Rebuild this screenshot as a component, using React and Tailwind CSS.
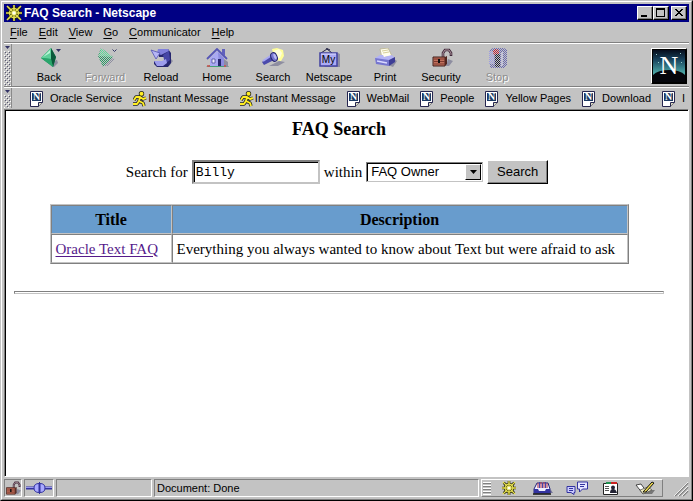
import { useState } from "react";

const menus = ["File", "Edit", "View", "Go", "Communicator", "Help"];

const bookmarks = [
  { label: "Oracle Service", type: "page" },
  { label: "Instant Message", type: "aim" },
  { label: "Instant Message", type: "aim" },
  { label: "WebMail", type: "page" },
  { label: "People", type: "page" },
  { label: "Yellow Pages", type: "page" },
  { label: "Download", type: "page" },
  { label: "I", type: "page" },
];

const results = [
  {
    title: "Oracle Text FAQ",
    description: "Everything you always wanted to know about Text but were afraid to ask",
  },
];

const WheelIcon = ({ className }) => (
  <svg className={className} viewBox="0 0 16 16" aria-hidden="true">
    <path d="M8 0v16M0 8h16M2 2l12 12M14 2L2 14" stroke="#222200" strokeWidth="3" />
    <circle cx="8" cy="8" r="4.5" fill="none" stroke="#222200" strokeWidth="3" />
    <path d="M8 0v16M0 8h16M1 1l14 14M15 1L1 15" stroke="#e6e052" strokeWidth="1.6" />
    <circle cx="8" cy="8" r="4.5" fill="none" stroke="#e6e052" strokeWidth="1.3" />
    <circle cx="8" cy="8" r="1.800" fill="#fffff0" />
  </svg>
);

const ToolSvg = ({ children }) => (
  <svg className="w-6 h-5 shrink-0" viewBox="0 0 24 20" aria-hidden="true">
    {children}
  </svg>
);

const BackIcon = () => (
  <ToolSvg>
    <path d="M14 18l3 1 4-4-1-3-3 1z" fill="#8d8da0" />
    <path d="M4 10L14 0l5 9-3 10z" fill="#18965c" />
    <path d="M14 0l5 9-3 10-2-8z" fill="#0b5a3b" />
    <path d="M4 10L14 0v11z" fill="#5fd09a" />
    <path d="M6 9l7-7v3z" fill="#b9f5d6" />
    <path d="M4 10l10 1 2 8z" fill="#2aa56c" />
    <path d="M19 1h5l-2.500 3z" fill="#333366" />
  </ToolSvg>
);

const ForwardIcon = () => (
  <ToolSvg>
    <defs>
      <pattern id="dither" width="2" height="2" patternUnits="userSpaceOnUse">
        <path d="M0 0h1v1H0zM1 1h1v1H1z" fill="#c3c3c3" />
      </pattern>
    </defs>
    <path d="M9 18h6l7-7-4-1z" fill="#8d8da0" />
    <path d="M5 8l3-8 12 9-10 10z" fill="#289a64" />
    <path d="M8 0l12 9-14-1z" fill="#5ade98" />
    <path d="M4 0h20v20H4z" fill="url(#dither)" />
    <path d="M19.500 1.500l2 2 2-2" fill="none" stroke="#333366" />
  </ToolSvg>
);

const ReloadIcon = () => (
  <ToolSvg>
    <path d="M14 19l6-1 4-5-3-3z" fill="#8d8da0" />
    <path d="M9 1h10l3 4v10l-3 4H8l-3-3v-3h10V9l-5 0z" fill="#26266f" />
    <path d="M9 1h10l1 2-8 4-4-2z" fill="#8080dc" />
    <path d="M14 7l6-4 1 9-5 4z" fill="#4646a6" />
    <path d="M5 13h8l4-2 1 4-4 3H8z" fill="#9c9cec" />
    <path d="M2 2l9 3-4 6z" fill="#b5b5f5" stroke="#5252b0" strokeWidth=".8" />
  </ToolSvg>
);

const HomeIcon = () => (
  <ToolSvg>
    <path d="M1 19l4-2h17l2 2z" fill="#46a078" />
    <path d="M18 18l5 1v-5l-4-3z" fill="#8d8da0" />
    <path d="M5 10l7-7 7 7v8H5z" fill="#a9a9f2" />
    <path d="M13 4l6 6v8h-5z" fill="#8c8ce0" />
    <path d="M17 1h3v7l-3-3z" fill="#6161bd" />
    <path d="M2 11L12 1l10 10" fill="none" stroke="#5656b6" strokeWidth="1.800" />
    <path d="M7 11h3v4H7z" fill="#eeeeff" stroke="#3c3c91" strokeWidth=".7" />
    <path d="M13 11h3v7h-3z" fill="#26266f" />
    <path d="M2 18h3M19 18h2" stroke="#d04b4b" strokeWidth="1.500" />
  </ToolSvg>
);

const SearchIcon = () => (
  <ToolSvg>
    <path d="M11 1l5-1 6 2 1 6-3 5-6-1z" fill="#ffff99" />
    <path d="M13 3l5-2 3 4-2 5-4 1z" fill="#ffffd9" />
    <path d="M8 18l10-5 6 1-7 4z" fill="#8d8da0" />
    <path d="M1 14l9-7 3 5-10 5z" fill="#4b4bac" />
    <path d="M2 13l9-6" stroke="#a9a9f2" strokeWidth="2" />
    <ellipse cx="13" cy="9" rx="3" ry="4.5" transform="rotate(-24 13 9)" fill="#7676cf" stroke="#26266f" />
    <ellipse cx="14" cy="8.500" rx="1.300" ry="3" transform="rotate(-24 14 8.500)" fill="#b9b9f5" />
  </ToolSvg>
);

const MyIcon = () => (
  <ToolSvg>
    <path d="M7 19h16V6l-2-1z" fill="#8d8da0" />
    <path d="M4 5L10 1l5 4M9 0l4 2" fill="none" stroke="#222244" />
    <path d="M3 5h17v13H3z" fill="#ababf4" stroke="#4242a0" strokeWidth="1.500" />
    <path d="M4 6h15" stroke="#e0e0ff" />
    <text x="11.500" y="15" textAnchor="middle" fontFamily="Liberation Sans, sans-serif" fontSize="10" fill="#000">
      My
    </text>
  </ToolSvg>
);

const PrintIcon = () => (
  <ToolSvg>
    <path d="M15 17l5 2 4-6-3-2z" fill="#8d8da0" />
    <path d="M7 1l8-1 4 8-10 2z" fill="#fffdec" stroke="#b9b38b" strokeWidth=".8" />
    <path d="M9 3l6-1M10 5l6-1" stroke="#d6cf9d" />
    <path d="M2 10l5-3h3l1 2 8-2 3 3-5 3H3z" fill="#b3b3f5" />
    <path d="M2 10l14 2v6L3 16z" fill="#7575cf" />
    <path d="M16 12l6-3v5l-6 4z" fill="#3d3d96" />
    <path d="M4 13l10 2" stroke="#d9d9ff" strokeWidth="1.500" />
  </ToolSvg>
);

const LockShape = () => (
  <>
    <path d="M17 18l3 0 4-5-5-2z" fill="#8d8da0" />
    <path d="M14 9V5l2-3h4l2 3v3" fill="none" stroke="#40283a" strokeWidth="2.600" />
    <path d="M14 9V5l2-3h4l2 3v2" fill="none" stroke="#b9a0a8" strokeWidth=".9" />
    <path d="M4 9h12v9H4z" fill="#c0705c" stroke="#42201c" />
    <path d="M5 11h11M5 13.500h11M5 16h11" stroke="#7c382e" />
    <path d="M10 11v4" stroke="#111" strokeWidth="2" />
    <path d="M16 9l2-1v8l-2 2z" fill="#50241f" />
  </>
);

const LockIcon = () => (
  <ToolSvg>
    <LockShape />
  </ToolSvg>
);

const StopIcon = () => (
  <ToolSvg>
    <path d="M5 2l3-2h11l3 2v15l-3 3H5z" fill="#6a6ab0" />
    <path d="M4 3h5v13H4z" fill="#9d9de0" />
    <circle cx="11" cy="4" r="3" fill="#c01a2f" />
    <path d="M10 6h5v13h-5z" fill="#222238" />
    <path d="M16 4h2v14h-2z" fill="#c3c3e8" />
    <path d="M2 0h20v20H2z" fill="url(#dither)" />
  </ToolSvg>
);

const tools = [
  { label: "Back", Icon: BackIcon },
  { label: "Forward", Icon: ForwardIcon, disabled: true },
  { label: "Reload", Icon: ReloadIcon },
  { label: "Home", Icon: HomeIcon },
  { label: "Search", Icon: SearchIcon },
  { label: "Netscape", Icon: MyIcon },
  { label: "Print", Icon: PrintIcon },
  { label: "Security", Icon: LockIcon },
  { label: "Stop", Icon: StopIcon, disabled: true },
];

const PageIcon = () => (
  <svg className="w-3.5 h-4 shrink-0" viewBox="0 0 14 16" aria-hidden="true">
    <path d="M.5 .5h12v11l-4 4h-8z" fill="#fff" stroke="#26264f" />
    <path d="M8.500 15.500v-4h4" fill="#d8d8c0" stroke="#26264f" />
    <path d="M2 2h9v8H2z" fill="#1c3a63" />
    <text x="6.500" y="9" textAnchor="middle" fontFamily="Liberation Serif, serif" fontWeight="bold" fontSize="10" fill="#fff">
      N
    </text>
  </svg>
);

const AimIcon = () => (
  <svg className="w-3.5 h-4 shrink-0" viewBox="0 0 14 16" aria-hidden="true">
    <g fill="none" strokeLinejoin="round">
      <path d="M1 9l2-3 4 0 3 2 3-1M7 6l-1 4 4 2 1 3M6 10l-2 3-4 0" stroke="#222" strokeWidth="3.400" />
      <circle cx="8.500" cy="2.700" r="2.700" fill="#222" />
      <path d="M1 9l2-3 4 0 3 2 3-1M7 6l-1 4 4 2 1 3M6 10l-2 3-4 0" stroke="#ffee22" strokeWidth="1.900" />
      <circle cx="8.500" cy="2.700" r="2" fill="#ffee22" />
    </g>
  </svg>
);

const Grip = ({ className }) => (
  <svg className={`w-2 shrink-0 ${className}`} aria-hidden="true">
    <defs>
      <pattern id="dots" width="4" height="4" patternUnits="userSpaceOnUse">
        <path d="M1 0h1v1H1zM3 2h1v1H3z" fill="#555570" />
        <path d="M2 1h1v1H2zM0 3h1v1H0z" fill="#fff" />
      </pattern>
    </defs>
    <rect y="7" width="7" height="100%" fill="url(#dots)" />
    <path d="M1 2h5L3.500 5z" fill="#333366" />
    <path d="M7.500 0v60" stroke="#8a8a8a" />
  </svg>
);

const NetscapeLogo = () => (
  <svg className="w-8 h-8" viewBox="0 0 32 32" role="img" aria-label="Netscape">
    <defs>
      <linearGradient id="sky" x1="0" y1="0" x2="0" y2="1">
        <stop offset="0" stopColor="#060d1c" />
        <stop offset=".3" stopColor="#17425c" />
        <stop offset=".7" stopColor="#4aa3a3" />
      </linearGradient>
    </defs>
    <path d="M0 0h32v32H0z" fill="url(#sky)" />
    <path d="M0 25q5-5 16-5t16 5v7H0z" fill="#05060c" />
    <path d="M3 4h1v1H3zM27 3h1v1h-1zM5 12h1v1H5zM28 12h1v1h-1z" fill="#9cc" />
    <text x="16" y="24" textAnchor="middle" fontFamily="Liberation Serif, serif" fontSize="26" fill="#fff">
      N
    </text>
  </svg>
);

const MailIcon = () => (
  <svg className="w-5 h-3.5" viewBox="0 0 20 14" aria-hidden="true">
    <path d="M15 12h5l-2-3z" fill="#777799" />
    <path d="M4 2h11l2 6v4H1V8z" fill="#eeeeff" stroke="#22227a" />
    <path d="M5 2v5M8 1v6M11 1v6M14 2v5" stroke="#b02a3f" />
    <path d="M6.500 1v6M9.500 2v5M12.500 1v6" stroke="#4444aa" />
    <path d="M1 8h4l1 2h6l1-2h4v4H1z" fill="#3333a0" />
    <path d="M0 13h18" stroke="#111" strokeWidth="1.500" />
  </svg>
);

const ChatIcon = () => (
  <svg className="w-6 h-3.5" viewBox="0 0 24 14" aria-hidden="true">
    <path d="M12.500 1h10v7h-5l-3 3v-3h-2z" fill="#e6e6ff" stroke="#3333a0" />
    <path d="M2 5.500h8v6h-1v2l-3-2H2z" fill="#ccccff" stroke="#3333a0" />
    <path d="M15 3.500h5M15 5.500h4M4 7.500h4M4 9.500h4" stroke="#3333a0" />
  </svg>
);

const CardIcon = () => (
  <svg className="w-5 h-3.5" viewBox="0 0 20 14" aria-hidden="true">
    <path d="M2.500 2.500h14v11h-14z" fill="#fff" stroke="#222" />
    <path d="M5 1h5v2H5z" fill="#209050" />
    <path d="M10 1h6v2h-6z" fill="#cc2222" />
    <path d="M4 5.500h4M4 7.500h4M4 9.500h4" stroke="#555" />
    <circle cx="12" cy="6.500" r="2" fill="#223" />
    <path d="M9 12q0-4 3-4t4 4z" fill="#223" />
  </svg>
);

const PenIcon = () => (
  <svg className="w-5 h-3.5" viewBox="0 0 20 14" aria-hidden="true">
    <path d="M7 13h10l3-4H10z" fill="#777" />
    <path d="M1 4l5-1 5 7-3 3z" fill="#fff" stroke="#222" strokeWidth=".8" />
    <path d="M5 9l3 4 9-4-4-3z" fill="#f3eec0" stroke="#555" strokeWidth=".8" />
    <path d="M8 11l9-10 2 1-8 9z" fill="#f0dc50" stroke="#111" />
  </svg>
);

const components = [
  { label: "Navigator", icon: <WheelIcon className="w-4 h-3.5" /> },
  { label: "Inbox", icon: <MailIcon /> },
  { label: "Newsgroups", icon: <ChatIcon /> },
  { label: "Address Book", icon: <CardIcon /> },
  { label: "Composer", icon: <PenIcon /> },
];

const WindowButton = ({ label, children }) => (
  <button
    aria-label={label}
    className="w-4 h-3.5 bg-[#c3c3c3] border border-t-white border-l-white border-r-black border-b-black shadow-[inset_-1px_-1px_#808080]"
  >
    <svg className="w-3.5 h-3" viewBox="0 0 14 12" fill="none" stroke="#000" shapeRendering="crispEdges">
      {children}
    </svg>
  </button>
);

const SearchForm = () => {
  const [query, setQuery] = useState("Billy");
  const [scope, setScope] = useState("FAQ Owner");

  return (
    <form
      className="mt-[21px] pr-1 flex items-center justify-center gap-1 whitespace-nowrap"
      onSubmit={(e) => e.preventDefault()}
    >
      <label htmlFor="query">Search for</label>
      <input
        id="query"
        type="text"
        value={query}
        onChange={(e) => setQuery(e.target.value)}
        className="w-32 h-6 px-0.5 rounded-none bg-white font-['Liberation_Mono',monospace] text-[13px] border-2 border-t-[#808080] border-l-[#808080] border-r-[#c3c3c3] border-b-[#c3c3c3] shadow-[inset_1px_1px_#000] outline-none"
      />
      <label htmlFor="scope">within</label>
      <div className="relative">
        <select
          id="scope"
          value={scope}
          onChange={(e) => setScope(e.target.value)}
          className="block appearance-none w-[117px] h-5 pl-1 rounded-none bg-white font-['Liberation_Sans',sans-serif] text-[13px] leading-4 border border-t-[#808080] border-l-[#808080] border-r-[#c3c3c3] border-b-[#c3c3c3] shadow-[inset_1px_1px_#000] outline-none"
        >
          <option>FAQ Owner</option>
        </select>
        <span className="absolute top-0.5 right-0.5 bottom-0.5 w-4 flex items-center justify-center pointer-events-none bg-[#c3c3c3] border border-t-white border-l-white border-r-black border-b-black">
          <svg className="w-[7px] h-1" viewBox="0 0 7 4" aria-hidden="true">
            <path d="M0 0h7L3.500 4z" />
          </svg>
        </span>
      </div>
      <button
        type="submit"
        className="w-[61px] h-6 bg-[#c3c3c3] font-['Liberation_Sans',sans-serif] text-[13px] border border-t-white border-l-white border-r-black border-b-black shadow-[inset_-1px_-1px_#808080]"
      >
        Search
      </button>
    </form>
  );
};

const cell = "border border-t-[#808080] border-l-[#808080] border-r-[#c3c3c3] border-b-[#c3c3c3] px-1";

const App = () => {
  return (
    <div className="min-h-screen flex flex-col bg-[#c3c3c3] text-black border border-t-[#c3c3c3] border-l-[#c3c3c3] border-r-black border-b-black font-['Liberation_Sans',sans-serif] text-[11px]">
      <div className="flex-1 min-w-0 flex flex-col p-0.5 border border-t-white border-l-white border-r-[#808080] border-b-[#808080]">
        {/* Title bar */}
        <header className="flex items-center h-[18px] px-0.5 bg-[#000084] text-white">
          <WheelIcon className="w-4 h-4 shrink-0" />
          <h1 className="ml-0.5 flex-1 text-xs font-bold">FAQ Search - Netscape</h1>
          <div className="flex">
            <WindowButton label="Minimize">
              <path d="M3 9h6" strokeWidth="2" />
            </WindowButton>
            <WindowButton label="Maximize">
              <path d="M2 1.500h9M2.500 1v9M10.500 1v9M2 9.500h9M2 2.500h9" />
            </WindowButton>
            <span className="w-0.5" />
            <WindowButton label="Close">
              <path d="M3 2l7 7M4 2l7 7M10 2L3 9M11 2L4 9" />
            </WindowButton>
          </div>
        </header>

        {/* Menu bar */}
        <nav className="flex items-center h-5 px-1.5 gap-[11px] leading-4">
          {menus.map((name) => (
            <button key={name}>
              <span className="underline underline-offset-2">{name[0]}</span>
              {name.slice(1)}
            </button>
          ))}
        </nav>

        {/* Navigation toolbar */}
        <div className="border-t border-t-[#808080]">
          <div className="flex border-t border-white">
            <Grip className="h-[42px]" />
            <div className="flex flex-1 pl-[9px] pt-1 pb-0.5">
              {tools.map(({ label, Icon, disabled }) => (
                <button
                  key={label}
                  disabled={disabled}
                  className="w-14 flex flex-col items-center gap-0.5 leading-[14px] disabled:text-[#8c8c8c] disabled:[text-shadow:1px_1px_0_#fff]"
                >
                  <Icon />
                  {label}
                </button>
              ))}
            </div>
            <div className="self-start mt-1 mr-0.5 p-px bg-black border border-t-white border-l-white border-r-black border-b-black">
              <NetscapeLogo />
            </div>
          </div>
        </div>

        {/* Personal toolbar */}
        <div className="border-t border-t-[#808080]">
          <div className="flex h-[22px] overflow-hidden border-t border-white">
            <Grip className="h-5" />
            <div className="flex items-center gap-[11px] pl-[18px] whitespace-nowrap">
              {bookmarks.map(({ label, type }, index) => (
                <a
                  key={index}
                  href="#"
                  className={type === "aim" ? "flex items-center gap-px" : "flex items-center gap-1.5"}
                >
                  {type === "aim" ? <AimIcon /> : <PageIcon />}
                  {label}
                </a>
              ))}
            </div>
          </div>
        </div>

        {/* Page */}
        <main className="flex-1 flex bg-white border border-t-[#808080] border-l-[#808080] border-r-white border-b-white font-['Liberation_Serif',serif] text-[15px]">
          <div className="flex-1 min-w-0 pl-2 pr-6 pt-2 border-t border-l border-black">
            <h2 className="text-center text-lg leading-5 font-bold">FAQ Search</h2>
            <SearchForm />
            <table className="mt-5 mx-auto w-[579px] max-w-full border-separate border-spacing-0 border border-t-[#c3c3c3] border-l-[#c3c3c3] border-r-[#808080] border-b-[#808080]">
              <thead>
                <tr className="h-[29px] bg-[#689ccd] text-base leading-5">
                  <th className={`${cell} w-[121px]`}>Title</th>
                  <th className={cell}>Description</th>
                </tr>
              </thead>
              <tbody>
                {results.map((row) => (
                  <tr key={row.title} className="h-[29px] leading-5">
                    <td className={cell}>
                      <a href="#" className="text-[#551a8b] underline underline-offset-2">
                        {row.title}
                      </a>
                    </td>
                    <td className={cell}>{row.description}</td>
                  </tr>
                ))}
              </tbody>
            </table>
            <hr className="mt-[27px] h-[3px] border border-t-[#808080] border-l-[#808080] border-r-[#c3c3c3] border-b-[#c3c3c3]" />
          </div>
        </main>

        {/* Status bar */}
        <footer className="flex items-stretch gap-0.5 h-5 pt-0.5">
          <button aria-label="Security" className="w-[18px] flex items-center justify-center border border-t-[#808080] border-l-[#808080] border-r-white border-b-white">
            <svg className="w-4 h-3.5" viewBox="2 0 22 19" aria-hidden="true">
              <LockShape />
            </svg>
          </button>
          <div className="w-[30px] flex items-center justify-center border border-t-[#808080] border-l-[#808080] border-r-white border-b-white">
            <svg className="w-[26px] h-3" viewBox="0 0 26 12" aria-hidden="true">
              <path d="M0 6h26" stroke="#3333a0" strokeWidth="3" />
              <path d="M0 5.500h26" stroke="#9999ee" />
              <path d="M13 1.500q-5 0-5 4.500t5 4.500zM14 1.500q5 0 5 4.500t-5 4.500z" fill="#aaaaff" stroke="#3333a0" />
              <path d="M13.500 0v12" stroke="#3333a0" />
            </svg>
          </div>
          <div className="w-24 border border-t-[#808080] border-l-[#808080] border-r-white border-b-white" />
          <div className="flex-1 pl-0.5 leading-4 border border-t-[#808080] border-l-[#808080] border-r-white border-b-white" role="status">
            Document: Done
          </div>
          <div className="flex border border-t-white border-l-white border-r-[#808080] border-b-[#808080]">
            <svg className="w-2.5 h-full" viewBox="0 0 10 16" shapeRendering="crispEdges" aria-hidden="true">
              <path d="M1 2.500h8M1 5.500h8M1 8.500h8M1 11.500h8M1 14.500h8" stroke="#fff" />
              <path d="M1 3.500h8M1 6.500h8M1 9.500h8M1 12.500h8" stroke="#808080" />
            </svg>
            {components.map(({ label, icon }) => (
              <button key={label} aria-label={label} className="w-[34px] flex items-center justify-center">
                {icon}
              </button>
            ))}
          </div>
          <svg className="w-6 h-full" viewBox="0 0 24 18" aria-hidden="true">
            <path d="M10 17L23 4M14 17l9-9M18 17l5-5" stroke="#808080" strokeWidth="1.500" />
            <path d="M9 17L23 3M13 17L23 7M17 17l6-6" stroke="#fff" strokeWidth=".8" />
          </svg>
        </footer>
      </div>
    </div>
  );
};

export default App;
